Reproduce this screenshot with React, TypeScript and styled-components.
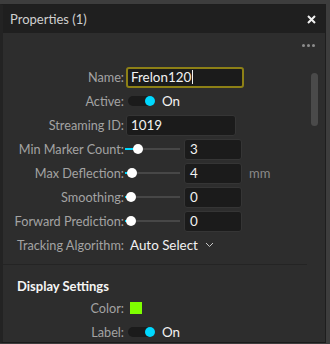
import React from "react";
import styled, { createGlobalStyle } from "styled-components";

const GlobalStyle = createGlobalStyle`
    html, body {
        margin: 0;
        padding: 0;
        background: #3d3d3d;
        font-family: "Lato", "Open Sans", sans-serif;
    }
    * {
        box-sizing: border-box;
    }
`;

export default function App() {
    return (
        <>
            <GlobalStyle />
            <Frame>
                <Panel>
                    <TitleBar>
                        <Title>Properties (1)</Title>
                        <CloseIcon width="9" height="9" viewBox="0 0 9 9">
                            <path d="M1 1 L8 8 M8 1 L1 8" stroke="#f0f0f0" strokeWidth="2" />
                        </CloseIcon>
                    </TitleBar>
                    <Toolbar>
                        <Dots>
                            <Dot />
                            <Dot />
                            <Dot />
                        </Dots>
                    </Toolbar>
                    <Body>
                        <Row>
                            <Label>Name:</Label>
                            <TextBox width={118} focused>
                                Frelon120
                                <Caret />
                            </TextBox>
                        </Row>
                        <Row>
                            <Label>Active:</Label>
                            <ToggleWrap>
                                <Track>
                                    <Knob />
                                </Track>
                                <Value>On</Value>
                            </ToggleWrap>
                        </Row>
                        <Row>
                            <Label>Streaming ID:</Label>
                            <TextBox width={110}>1019</TextBox>
                        </Row>
                        <SliderRow label="Min Marker Count:" pos={13} value="3" />
                        <SliderRow label="Max Deflection:" pos={7} value="4" unit="mm" />
                        <SliderRow label="Smoothing:" pos={6} value="0" />
                        <SliderRow label="Forward Prediction:" pos={6} value="0" />
                        <Row>
                            <Label>Tracking Algorithm:</Label>
                            <Select>
                                Auto Select
                                <svg width="9" height="6" viewBox="0 0 9 6">
                                    <path d="M1 1 L4.5 4.5 L8 1" stroke="#c8c8c8" strokeWidth="1" fill="none" />
                                </svg>
                            </Select>
                        </Row>
                        <Divider />
                        <SectionTitle>Display Settings</SectionTitle>
                        <Row>
                            <Label>Color:</Label>
                            <Swatch color="#7fff00" />
                        </Row>
                        <Row>
                            <Label>Label:</Label>
                            <ToggleWrap>
                                <Track>
                                    <Knob />
                                </Track>
                                <Value>On</Value>
                            </ToggleWrap>
                        </Row>
                        <Scrollbar />
                    </Body>
                </Panel>
            </Frame>
        </>
    );
}

function SliderRow({ label, pos, value, unit }: { label: string; pos: number; value: string; unit?: string }) {
    return (
        <Row>
            <Label>{label}</Label>
            <SliderGroup>
                <Slider>
                    <SliderFill style={{ width: pos }} />
                    <SliderThumb style={{ left: pos - 5 }} />
                </Slider>
                <NumberBox>{value}</NumberBox>
                {unit && <Unit>{unit}</Unit>}
            </SliderGroup>
        </Row>
    );
}

const Frame = styled.div`
    width: 330px;
    height: 344px;
    padding: 4px 4px 1px 0;
`;

const Panel = styled.div`
    height: 100%;
    display: flex;
    flex-direction: column;
    background: #2d2d2d;
    border-left: 3px solid #232323;
    border-right: 1px solid #1e1e1e;
    border-bottom: 1px solid #1a1a1a;
    border-top: 1px solid #1e1e1e;
    overflow: hidden;
`;

const TitleBar = styled.div`
    height: 28px;
    flex-shrink: 0;
    display: flex;
    align-items: center;
    justify-content: space-between;
    padding: 0 9px 0 7px;
    background: #1f1f1f;
`;

const Title = styled.span`
    font-size: 13px;
    color: #cfcfcf;
`;

const CloseIcon = styled.svg`
    display: block;
`;

const Toolbar = styled.div`
    height: 27px;
    flex-shrink: 0;
    display: flex;
    align-items: center;
    justify-content: flex-end;
    padding: 0 10px 2px 0;
`;

const Dots = styled.div`
    display: flex;
    gap: 2px;
`;

const Dot = styled.span`
    width: 3px;
    height: 3px;
    border-radius: 50%;
    background: #8c8c8c;
`;

const Body = styled.div`
    position: relative;
    flex: 1;
    padding-top: 5px;
`;

const Row = styled.div`
    display: grid;
    grid-template-columns: 122px 1fr;
    align-items: center;
    height: 24px;
`;

const Label = styled.span`
    text-align: right;
    font-size: 12.7px;
    color: #a3a3a3;
    white-space: nowrap;
    padding-right: 1px;
`;

const TextBox = styled.div<{ width: number; focused?: boolean }>`
    width: ${(p) => p.width}px;
    height: 21px;
    margin-left: 1px;
    display: flex;
    align-items: center;
    padding-left: ${(p) => (p.focused ? 3 : 4)}px;
    background: #1b1b1b;
    border: ${(p) => (p.focused ? "2px solid #8d8016" : "1px solid #353535")};
    border-radius: 3px;
    font-size: 13.4px;
    color: #f2f2f2;
`;

const Caret = styled.span`
    width: 1px;
    height: 14px;
    background: #f2f2f2;
    margin-left: 1px;
`;

const ToggleWrap = styled.div`
    display: flex;
    align-items: center;
    gap: 7px;
    padding-left: 3px;
`;

const Track = styled.div`
    position: relative;
    width: 27px;
    height: 10px;
    border-radius: 5px;
    background: #1b1b1b;
`;

const Knob = styled.span`
    position: absolute;
    right: 0;
    top: 0;
    width: 10px;
    height: 10px;
    border-radius: 50%;
    background: #00d9ff;
`;

const Value = styled.span`
    font-size: 13.4px;
    color: #f2f2f2;
`;

const SliderGroup = styled.div`
    display: flex;
    align-items: center;
`;

const Slider = styled.div`
    position: relative;
    width: 55px;
    height: 2px;
    background: #474747;
    margin-right: 4px;
`;

const SliderFill = styled.span`
    position: absolute;
    left: 0;
    top: 0;
    height: 2px;
    background: #00d9ff;
`;

const SliderThumb = styled.span`
    position: absolute;
    top: -4px;
    width: 10px;
    height: 10px;
    border-radius: 50%;
    background: #ffffff;
`;

const NumberBox = styled.div`
    width: 58px;
    height: 21px;
    display: flex;
    align-items: center;
    padding-left: 5px;
    background: #1b1b1b;
    border: 1px solid #353535;
    border-radius: 3px;
    font-size: 13.4px;
    color: #f2f2f2;
`;

const Unit = styled.span`
    margin-left: 7px;
    font-size: 13px;
    color: #8a8a8a;
`;

const Select = styled.div`
    display: flex;
    align-items: center;
    gap: 7px;
    padding-left: 5px;
    font-size: 13.4px;
    color: #f2f2f2;
`;

const Divider = styled.div`
    height: 1px;
    width: 304px;
    margin-top: 7px;
    background: #242424;
`;

const SectionTitle = styled.div`
    height: 20px;
    margin-top: 11px;
    padding-left: 14px;
    display: flex;
    align-items: center;
    font-size: 13px;
    font-weight: 700;
    color: #f5f5f5;
`;

const Swatch = styled.span<{ color: string }>`
    width: 12px;
    height: 12px;
    margin-left: 5px;
    background: ${(p) => p.color};
`;

const Scrollbar = styled.div`
    position: absolute;
    top: 13px;
    right: 7px;
    width: 7px;
    height: 53px;
    border-radius: 4px;
    background: #4a4a4a;
`;
